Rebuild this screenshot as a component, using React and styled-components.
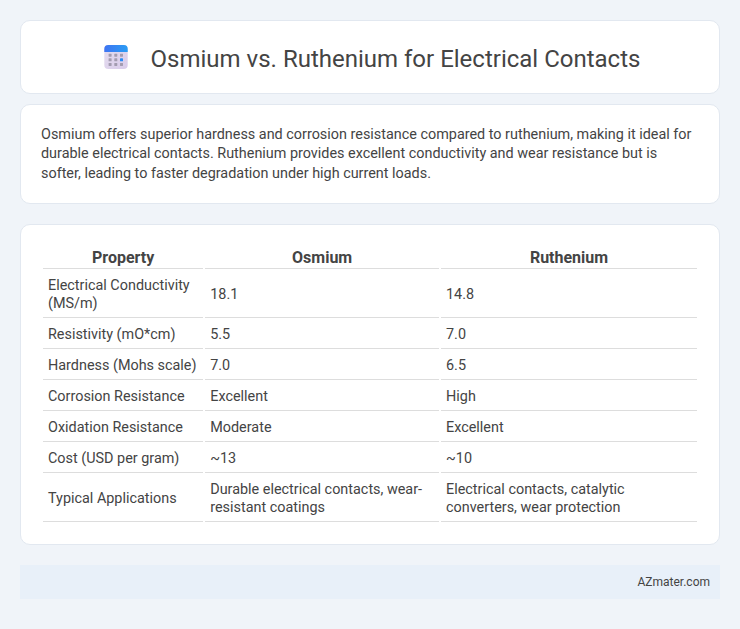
import styled, { createGlobalStyle } from "styled-components";

const GlobalStyle = createGlobalStyle`
  * { box-sizing: border-box; }
  body {
    margin: 0;
    background: #f0f4f9;
    font-family: Roboto, "Liberation Sans", sans-serif;
    color: #444;
  }
`;

const Page = styled.div`
  padding: 20px 20px 30px;
`;

const Card = styled.section`
  background: #fff;
  border: 1px solid #e2e8f0;
  border-radius: 10px;
  padding: 20px;
  margin-bottom: ${(p) => p.$gap || 10}px;
`;

const Header = styled(Card)`
  display: flex;
  align-items: center;
  justify-content: center;
  gap: 23px;
  height: 74px;
  padding-left: 24px;
`;

const Title = styled.h1`
  margin: 0;
  padding-top: 3px;
  font-size: 24px;
  font-weight: 400;
  line-height: 32px;
  color: #444;
`;

const Summary = styled.p`
  margin: 0;
  font-size: 14.4px;
  line-height: 19.3px;
  color: #444;
`;

const Table = styled.table`
  width: 100%;
  border-spacing: 2px;
  font-size: 14.4px;
  line-height: 18px;
`;

const Th = styled.th`
  font-size: 16px;
  font-weight: 700;
  line-height: 19px;
  padding: 1px 0;
  border-bottom: 1px solid #ddd;
  text-align: center;
  color: #444;
`;

const Td = styled.td`
  padding: 6px 5px 4px;
  border-bottom: 1px solid #ddd;
  color: #444;
`;

const Footer = styled.footer`
  background: #e8f0f9;
  height: 34px;
  padding: 0 10px;
  display: flex;
  align-items: center;
  justify-content: flex-end;
  font-size: 12px;
  color: #444;
`;

function CalendarIcon() {
  return (
    <svg width="24" height="24" viewBox="0 0 24 24">
      <defs>
        <linearGradient id="calTop" x1="0" y1="0" x2="1" y2="0">
          <stop offset="0" stopColor="#3f74f2" />
          <stop offset="1" stopColor="#2a9df4" />
        </linearGradient>
        <linearGradient id="calBody" x1="0" y1="0" x2="1" y2="1">
          <stop offset="0" stopColor="#e6deef" />
          <stop offset="1" stopColor="#d8cbea" />
        </linearGradient>
      </defs>
      <rect x="0.3" y="0" width="23.4" height="24" rx="4" fill="url(#calBody)" />
      <path d="M0.3 7V4a4 4 0 0 1 4-4h15.4a4 4 0 0 1 4 4v3z" fill="url(#calTop)" />
      {[0, 1, 2].map((r) =>
        [0, 1, 2].map((c) => (
          <rect
            key={`${r}-${c}`}
            x={4.6 + c * 5.7}
            y={8.7 + r * 4.6}
            width="3"
            height="3"
            rx="0.4"
            fill={r === 1 && c === 2 ? "#2a8cf5" : "#a39cb0"}
          />
        ))
      )}
    </svg>
  );
}

const rows = [
  ["Electrical Conductivity (MS/m)", "18.1", "14.8"],
  ["Resistivity (mO*cm)", "5.5", "7.0"],
  ["Hardness (Mohs scale)", "7.0", "6.5"],
  ["Corrosion Resistance", "Excellent", "High"],
  ["Oxidation Resistance", "Moderate", "Excellent"],
  ["Cost (USD per gram)", "~13", "~10"],
  [
    "Typical Applications",
    "Durable electrical contacts, wear-resistant coatings",
    "Electrical contacts, catalytic converters, wear protection",
  ],
];

export default function App() {
  return (
    <Page>
      <GlobalStyle />
      <Header>
        <CalendarIcon />
        <Title>Osmium vs. Ruthenium for Electrical Contacts</Title>
      </Header>
      <Card $gap={20}>
        <Summary>
          Osmium offers superior hardness and corrosion resistance compared to
          ruthenium, making it ideal for durable electrical contacts. Ruthenium
          provides excellent conductivity and wear resistance but is softer,
          leading to faster degradation under high current loads.
        </Summary>
      </Card>
      <Card $gap={20}>
        <Table>
          <thead>
            <tr>
              <Th>Property</Th>
              <Th>Osmium</Th>
              <Th>Ruthenium</Th>
            </tr>
          </thead>
          <tbody>
            {rows.map((row) => (
              <tr key={row[0]}>
                {row.map((cell) => (
                  <Td key={cell}>{cell}</Td>
                ))}
              </tr>
            ))}
          </tbody>
        </Table>
      </Card>
      <Footer>AZmater.com</Footer>
    </Page>
  );
}
